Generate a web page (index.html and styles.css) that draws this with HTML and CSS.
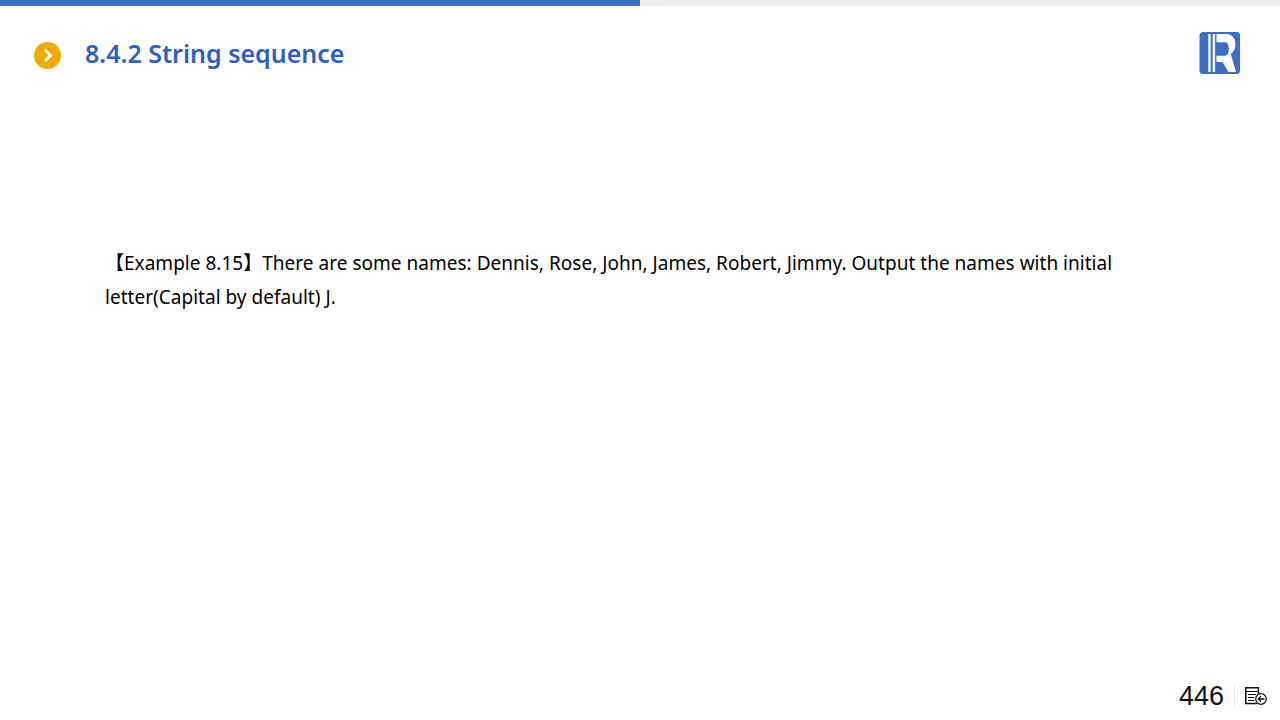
FILE: index.html
```html
<!DOCTYPE html>
<html lang="en">
<head>
<meta charset="utf-8">
<title>8.4.2 String sequence</title>
<link rel="stylesheet" href="styles.css">
</head>
<body>
<div class="slide">
  <div class="progress"><div class="progress-fill"></div></div>
  <header class="header">
    <div class="heading">
      <svg class="bullet" viewBox="0 0 27 27" aria-hidden="true"><circle cx="13.5" cy="13.5" r="13.5" fill="#f2a900"/><path d="M11 8l5.500 5.500L11 19" fill="none" stroke="#fff" stroke-width="3"/></svg>
      <h1 class="title">8.4.2 String sequence</h1>
    </div>
    <svg class="logo" viewBox="0 0 42 42" aria-hidden="true">
      <rect x="0.5" width="40.500" height="42" rx="3.500" fill="#3b6ecb"/>
      <path d="M9.300 2h2.400v38H9.300zM13.700 2h2.400v38h-2.400z" fill="#fff"/>
      <path d="M17.500 2H27c6 0 9.500 4.500 9.500 10.500 0 4.200-1.800 7.500-4.800 9.300L37 40h-7.500l-6-10h-6v-6.300H26c2.700 0 3.800-3 3.800-6.700s-1.100-6.700-3.800-6.700h-8.500z" fill="#fff"/>
    </svg>
  </header>
  <main class="content">
    <p class="example">【Example 8.15】There are some names: Dennis, Rose, John, James, Robert, Jimmy. Output the names with initial letter(Capital by default) J.</p>
  </main>
  <footer class="footer">
    <span class="page">446</span>
    <span class="divider"></span>
    <svg class="back" viewBox="0 0 22 18" aria-hidden="true">
      <path d="M12 16.500H.8V.8h12.600v7" fill="none" stroke="#111" stroke-width="1.500"/>
      <path d="M1 4.500h12M3 7.500h8M3 10.500h6M3 13.500h6" fill="none" stroke="#111" stroke-width="1.100"/>
      <circle cx="16" cy="12" r="5.300" fill="#fff" stroke="#111" stroke-width="1.200"/>
      <path d="M19.500 12H13M16 9.300L13.300 12l2.700 2.700" fill="none" stroke="#111" stroke-width="1.300"/>
    </svg>
  </footer>
</div>
</body>
</html>
```
FILE: styles.css
```css
* { box-sizing: border-box; }
html, body { margin: 0; height: 100%; background: #fff; }
.slide {
  width: 1280px;
  height: 720px;
  display: flex;
  flex-direction: column;
  overflow: hidden;
  font-family: "Noto Sans", "Open Sans", "Liberation Sans", sans-serif;
}
.progress { height: 6px; background: #ececec; flex: none; }
.progress-fill { width: 640px; height: 100%; background: #3b6ecb; }
.header {
  flex: none;
  height: 74px;
  padding: 26px 39px 0 34px;
  display: flex;
  justify-content: space-between;
  align-items: flex-start;
}
.heading { display: flex; align-items: flex-start; gap: 24px; padding-top: 4px; }
.bullet { width: 27px; height: 27px; flex: none; margin-top: 6px; }
.title { margin: 0; font-size: 25px; line-height: 34px; font-weight: 600; color: #2b5fc1; }
.logo { width: 42px; height: 42px; flex: none; }
.content { flex: 1; padding: 166px 160px 0 105px; }
.example { margin: 0; font-size: 19px; line-height: 34px; color: #000; letter-spacing: 0.02px; font-family: "Noto Sans", "Noto Sans CJK SC", sans-serif; }
.footer {
  flex: none;
  height: 50px;
  padding: 0 13px 0 0;
  display: flex;
  justify-content: flex-end;
  align-items: center;
  gap: 10px;
}
.page { font-family: "Liberation Sans", Arial, sans-serif; font-size: 27px; line-height: 34px; color: #111; padding-top: 2px; }
.divider { width: 1px; height: 20px; background: #dde3ee; margin-top: 2px; }
.back { width: 22px; height: 18px; flex: none; margin-top: 2px; }
```
